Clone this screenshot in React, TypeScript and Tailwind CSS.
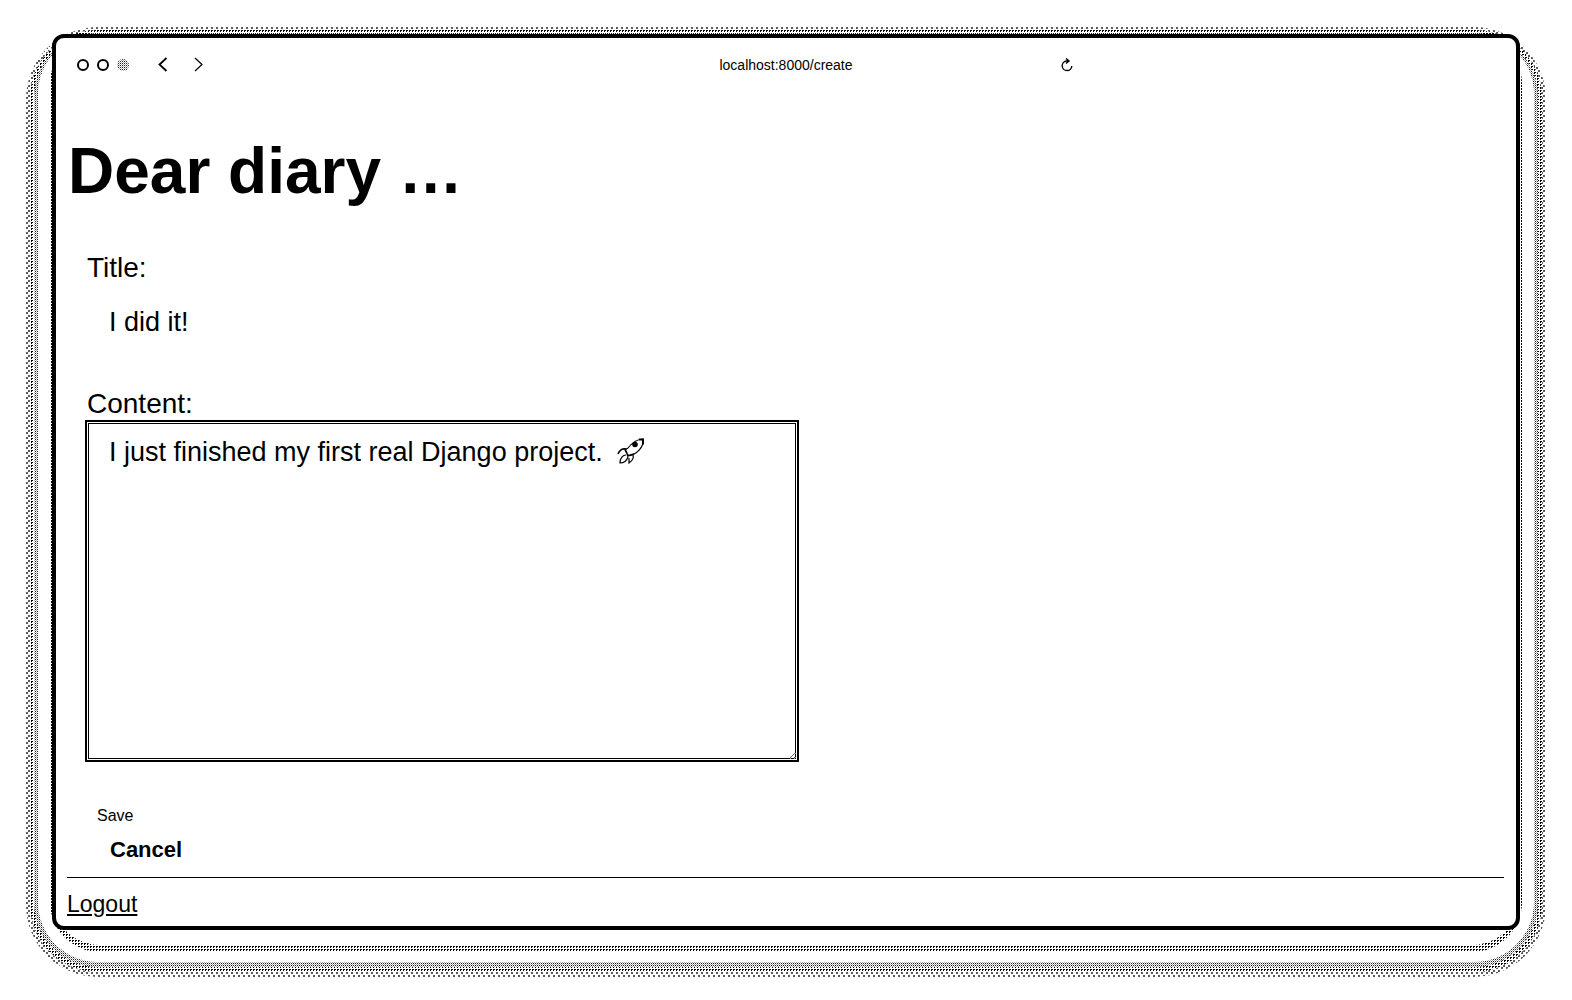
const outerDots =
  "bg-[radial-gradient(circle_at_1px_1px,#000_0.6px,transparent_0.9px),radial-gradient(circle_at_3px_4px,#000_0.6px,transparent_0.9px)] bg-[length:5px_5px]";
const middleDots =
  "bg-[conic-gradient(#000_25%,#fff_25%_50%,#fff_50%)] bg-[length:3px_3px]";
const innerDots =
  "bg-[conic-gradient(#222_25%,#fff_25%_50%,#aaa_50%_75%,#fff_75%)] bg-[length:2px_2px]";

function Toolbar() {
  return (
    <header className="grid h-[54px] grid-cols-[1fr_auto_1fr] items-center px-[21px]">
      <div className="flex items-center">
        <div className="flex gap-2">
          <span className="size-[12px] rounded-full border-2 border-black" />
          <span className="size-[12px] rounded-full border-2 border-black" />
          <span className={`size-[12px] rounded-full ${innerDots}`} />
        </div>
        <button type="button" aria-label="Back" className="ml-7">
          <svg width="12" height="16" viewBox="0 0 12 16" fill="none" stroke="black" strokeWidth="1.8">
            <path d="M9.500 1 2.500 7.500l7 6.500" />
          </svg>
        </button>
        <button type="button" aria-label="Forward" className="ml-6">
          <svg width="12" height="16" viewBox="0 0 12 16" fill="none" stroke="black" strokeWidth="1.200">
            <path d="M2 1 9 7.500l-7 6.500" />
          </svg>
        </button>
      </div>
      <span className="text-[14px]">localhost:8000/create</span>
      <button type="button" aria-label="Reload" className="ml-[207px] justify-self-start">
        <svg width="14" height="14" viewBox="0 0 14 14" fill="none" stroke="black" strokeWidth="1.400">
          <path d="M9 3H6.500a4.800 4.800 0 1 0 5.300 5M6 0.500l3 2.500-3 2.500" />
        </svg>
      </button>
    </header>
  );
}

function Rocket() {
  return (
    <svg role="img" aria-label="Rocket" className="absolute left-[532px] top-[18px]" width="28" height="27" viewBox="0 0 28 27" fill="none" stroke="black" strokeWidth="1.200">
      <path d="M10 11C14 6 19 1 26 1c1 8-6 16-16 17" />
      <path d="M10 11c-4-1-7 0-9 5M8 11l1 3M9 13l2 5M10 18l7-2" strokeWidth="1.600" />
      <path d="M16 17c1 3-1 6-4 8l0-5M9 17c-3 0-6 3-6 8 4 0 7-3 8-6" />
      <circle cx="18" cy="6.500" r="2.200" fill="black" />
      <path d="M22 1.500h4v5" strokeWidth="2" />
    </svg>
  );
}

export default function App() {
  return (
    <div className="min-h-screen bg-white px-[26px] pb-6 pt-[27px] font-['Liberation_Sans',Arial,sans-serif] text-black">
      <div className={`rounded-[72px] px-1 pb-[5px] pt-[3px] ${outerDots}`}>
        <div className={`rounded-[68px] px-1 pb-[5px] pt-[3px] ${middleDots}`}>
          <div className={`rounded-[64px] px-1 pb-[5px] pt-px ${innerDots}`}>
            <div className="rounded-[60px] bg-white px-3 pb-[10px]">
              <div className={`rounded-[50px] px-[2px] pb-[7px] ${middleDots}`}>
                <div className="rounded-[48px] bg-white pb-[15px]">
                  <div className="rounded-[12px] border-4 border-black bg-white">
                    <Toolbar />
                    <main className="px-[11px] pr-3">
                      <h1 className="mt-[43px] pl-px text-[64px] font-bold leading-[72px]">Dear diary …</h1>
                      <form className="mt-[45px] px-[18px]">
                        <label htmlFor="title" className="block px-[2px] text-[28px] leading-8">Title:</label>
                        <input id="title" defaultValue="I did it!" className="mt-4 block h-[44px] w-[714px] max-w-full px-6 text-[27px] outline-none" />
                        <label htmlFor="content" className="mt-11 block px-[2px] text-[28px] leading-8">Content:</label>
                        <div className="relative w-[714px] max-w-full">
                          <textarea
                            id="content"
                            defaultValue="I just finished my first real Django project."
                            className="block h-[342px] w-full resize border-2 border-black px-[22px] py-[14px] text-[27px] leading-8 shadow-[inset_0_0_0_1px_#fff,inset_0_0_0_2px_#000] outline-none"
                          />
                          <Rocket />
                        </div>
                        <button type="button" className="ml-3 mt-[42px] block text-[16px] leading-6">Save</button>
                        <a href="#cancel" className="ml-[25px] mt-2 inline-block text-[22px] font-bold leading-7">Cancel</a>
                      </form>
                      <hr className="mt-[13px] border-black" />
                      <a href="#logout" className="mb-2 mt-3 inline-block text-[23px] leading-7 underline">Logout</a>
                    </main>
                  </div>
                </div>
              </div>
            </div>
          </div>
        </div>
      </div>
    </div>
  );
}
